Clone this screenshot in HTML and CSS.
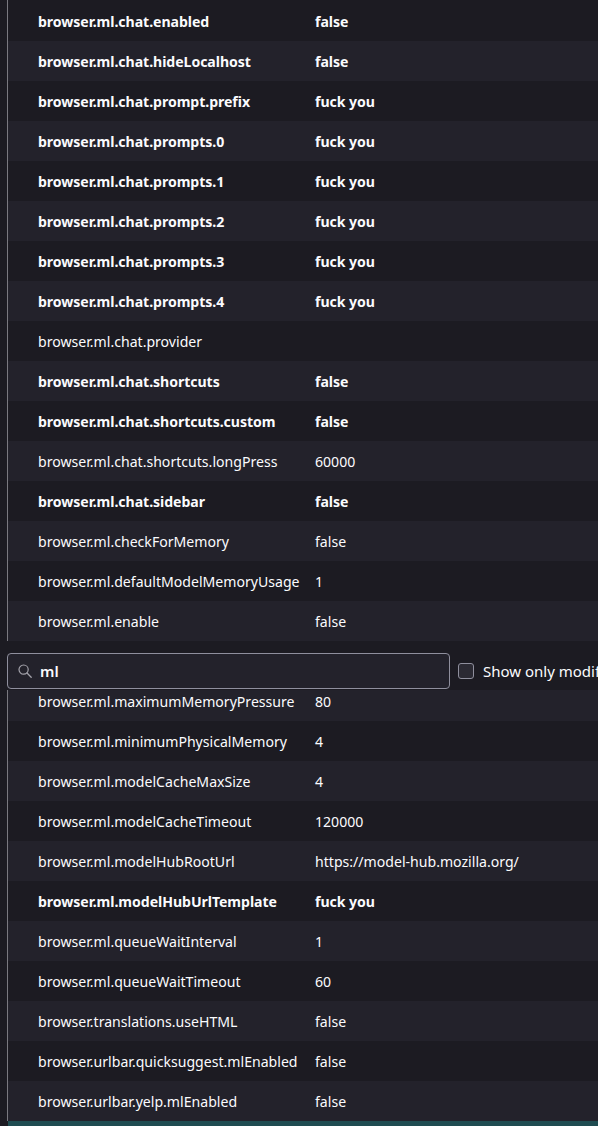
FILE: index.html
```html
<!DOCTYPE html>
<html lang="en">
<head>
    <meta charset="UTF-8">
    <meta name="viewport" content="width=device-width, initial-scale=1.0">
    <title>Advanced Preferences</title>
    <link rel="stylesheet" href="styles.css">
</head>
<body>
    <div class="prefs prefs-top">
        <div class="row modified"><span class="name">browser.ml.chat.enabled</span><span class="value">false</span></div>
        <div class="row modified"><span class="name">browser.ml.chat.hideLocalhost</span><span class="value">false</span></div>
        <div class="row modified"><span class="name">browser.ml.chat.prompt.prefix</span><span class="value">fuck you</span></div>
        <div class="row modified"><span class="name">browser.ml.chat.prompts.0</span><span class="value">fuck you</span></div>
        <div class="row modified"><span class="name">browser.ml.chat.prompts.1</span><span class="value">fuck you</span></div>
        <div class="row modified"><span class="name">browser.ml.chat.prompts.2</span><span class="value">fuck you</span></div>
        <div class="row modified"><span class="name">browser.ml.chat.prompts.3</span><span class="value">fuck you</span></div>
        <div class="row modified"><span class="name">browser.ml.chat.prompts.4</span><span class="value">fuck you</span></div>
        <div class="row"><span class="name">browser.ml.chat.provider</span><span class="value"></span></div>
        <div class="row modified"><span class="name">browser.ml.chat.shortcuts</span><span class="value">false</span></div>
        <div class="row modified"><span class="name">browser.ml.chat.shortcuts.custom</span><span class="value">false</span></div>
        <div class="row"><span class="name">browser.ml.chat.shortcuts.longPress</span><span class="value">60000</span></div>
        <div class="row modified"><span class="name">browser.ml.chat.sidebar</span><span class="value">false</span></div>
        <div class="row"><span class="name">browser.ml.checkForMemory</span><span class="value">false</span></div>
        <div class="row"><span class="name">browser.ml.defaultModelMemoryUsage</span><span class="value">1</span></div>
        <div class="row"><span class="name">browser.ml.enable</span><span class="value">false</span></div>
    </div>

    <div class="search-bar">
        <label class="search-box">
            <svg class="search-icon" width="14" height="14" viewBox="0 0 14 14">
                <circle cx="5.6" cy="5.6" r="4.6" fill="none" stroke="#a3a2aa" stroke-width="1.2"/>
                <line x1="9" y1="9" x2="13.2" y2="13.2" stroke="#a3a2aa" stroke-width="1.3" stroke-linecap="round"/>
            </svg>
            <input type="text" value="ml">
        </label>
        <label class="only-modified">
            <span class="checkbox"></span>
            <span class="only-modified-text">Show only modified preferences</span>
        </label>
    </div>

    <div class="prefs prefs-bottom">
        <div class="row odd clipped"><span class="name">browser.ml.maximumMemoryPressure</span><span class="value">80</span></div>
        <div class="row"><span class="name">browser.ml.minimumPhysicalMemory</span><span class="value">4</span></div>
        <div class="row odd"><span class="name">browser.ml.modelCacheMaxSize</span><span class="value">4</span></div>
        <div class="row"><span class="name">browser.ml.modelCacheTimeout</span><span class="value">120000</span></div>
        <div class="row odd"><span class="name">browser.ml.modelHubRootUrl</span><span class="value">https://model-hub.mozilla.org/</span></div>
        <div class="row modified"><span class="name">browser.ml.modelHubUrlTemplate</span><span class="value">fuck you</span></div>
        <div class="row odd"><span class="name">browser.ml.queueWaitInterval</span><span class="value">1</span></div>
        <div class="row"><span class="name">browser.ml.queueWaitTimeout</span><span class="value">60</span></div>
        <div class="row odd"><span class="name">browser.translations.useHTML</span><span class="value">false</span></div>
        <div class="row"><span class="name">browser.urlbar.quicksuggest.mlEnabled</span><span class="value">false</span></div>
        <div class="row odd"><span class="name">browser.urlbar.yelp.mlEnabled</span><span class="value">false</span></div>
    </div>

    <div class="selected-edge"></div>
</body>
</html>
```

FILE: styles.css
```css
body {
    margin: 0;
    background-color: #1c1b22;
    color: #fbfbfe;
    font-family: "Noto Sans", "Open Sans", sans-serif;
    font-size: 14.1px;
    overflow: hidden;
}
.prefs {
    margin-left: 7px;
    border-left: 1px solid #7a7980;
}
.prefs-top {
    padding-top: 1px;
}
.prefs-top .row:nth-child(even) {
    background-color: #23222b;
}
.prefs-bottom .row.odd {
    background-color: #23222b;
}
.row {
    display: grid;
    grid-template-columns: 307px 1fr;
    box-sizing: border-box;
    height: 40px;
    padding-top: 2px;
    line-height: 38px;
    white-space: nowrap;
}
.row.clipped {
    height: 31px;
    padding-top: 1px;
    line-height: 22px;
}
.name {
    padding-left: 30px;
    overflow: hidden;
}
.modified {
    font-weight: 700;
    letter-spacing: -0.05px;
}
.search-bar {
    display: flex;
    align-items: flex-start;
    box-sizing: border-box;
    height: 49px;
    padding: 12px 0 0 7px;
    white-space: nowrap;
    overflow: hidden;
}
.search-box {
    display: flex;
    flex-shrink: 0;
    align-items: center;
    box-sizing: border-box;
    width: 443px;
    height: 36px;
    border: 1px solid #8f8f9d;
    border-radius: 4px;
    background-color: #23222b;
}
.search-icon {
    margin-left: 10px;
    margin-right: 8px;
}
.search-box input {
    border: none;
    outline: none;
    background: transparent;
    color: #fbfbfe;
    font-family: inherit;
    font-size: 15px;
    font-weight: 600;
    padding: 0;
    width: 380px;
}
.only-modified {
    display: flex;
    flex-shrink: 0;
    align-items: center;
    gap: 9px;
    height: 36px;
    margin-left: 8px;
}
.only-modified-text {
    font-size: 15px;
}
.checkbox {
    box-sizing: border-box;
    width: 16px;
    height: 16px;
    border: 1px solid #8f8f9d;
    border-radius: 3px;
    background-color: #2b2a33;
}
.selected-edge {
    margin-left: 8px;
    height: 5px;
    background-color: #1f4c51;
}
```
